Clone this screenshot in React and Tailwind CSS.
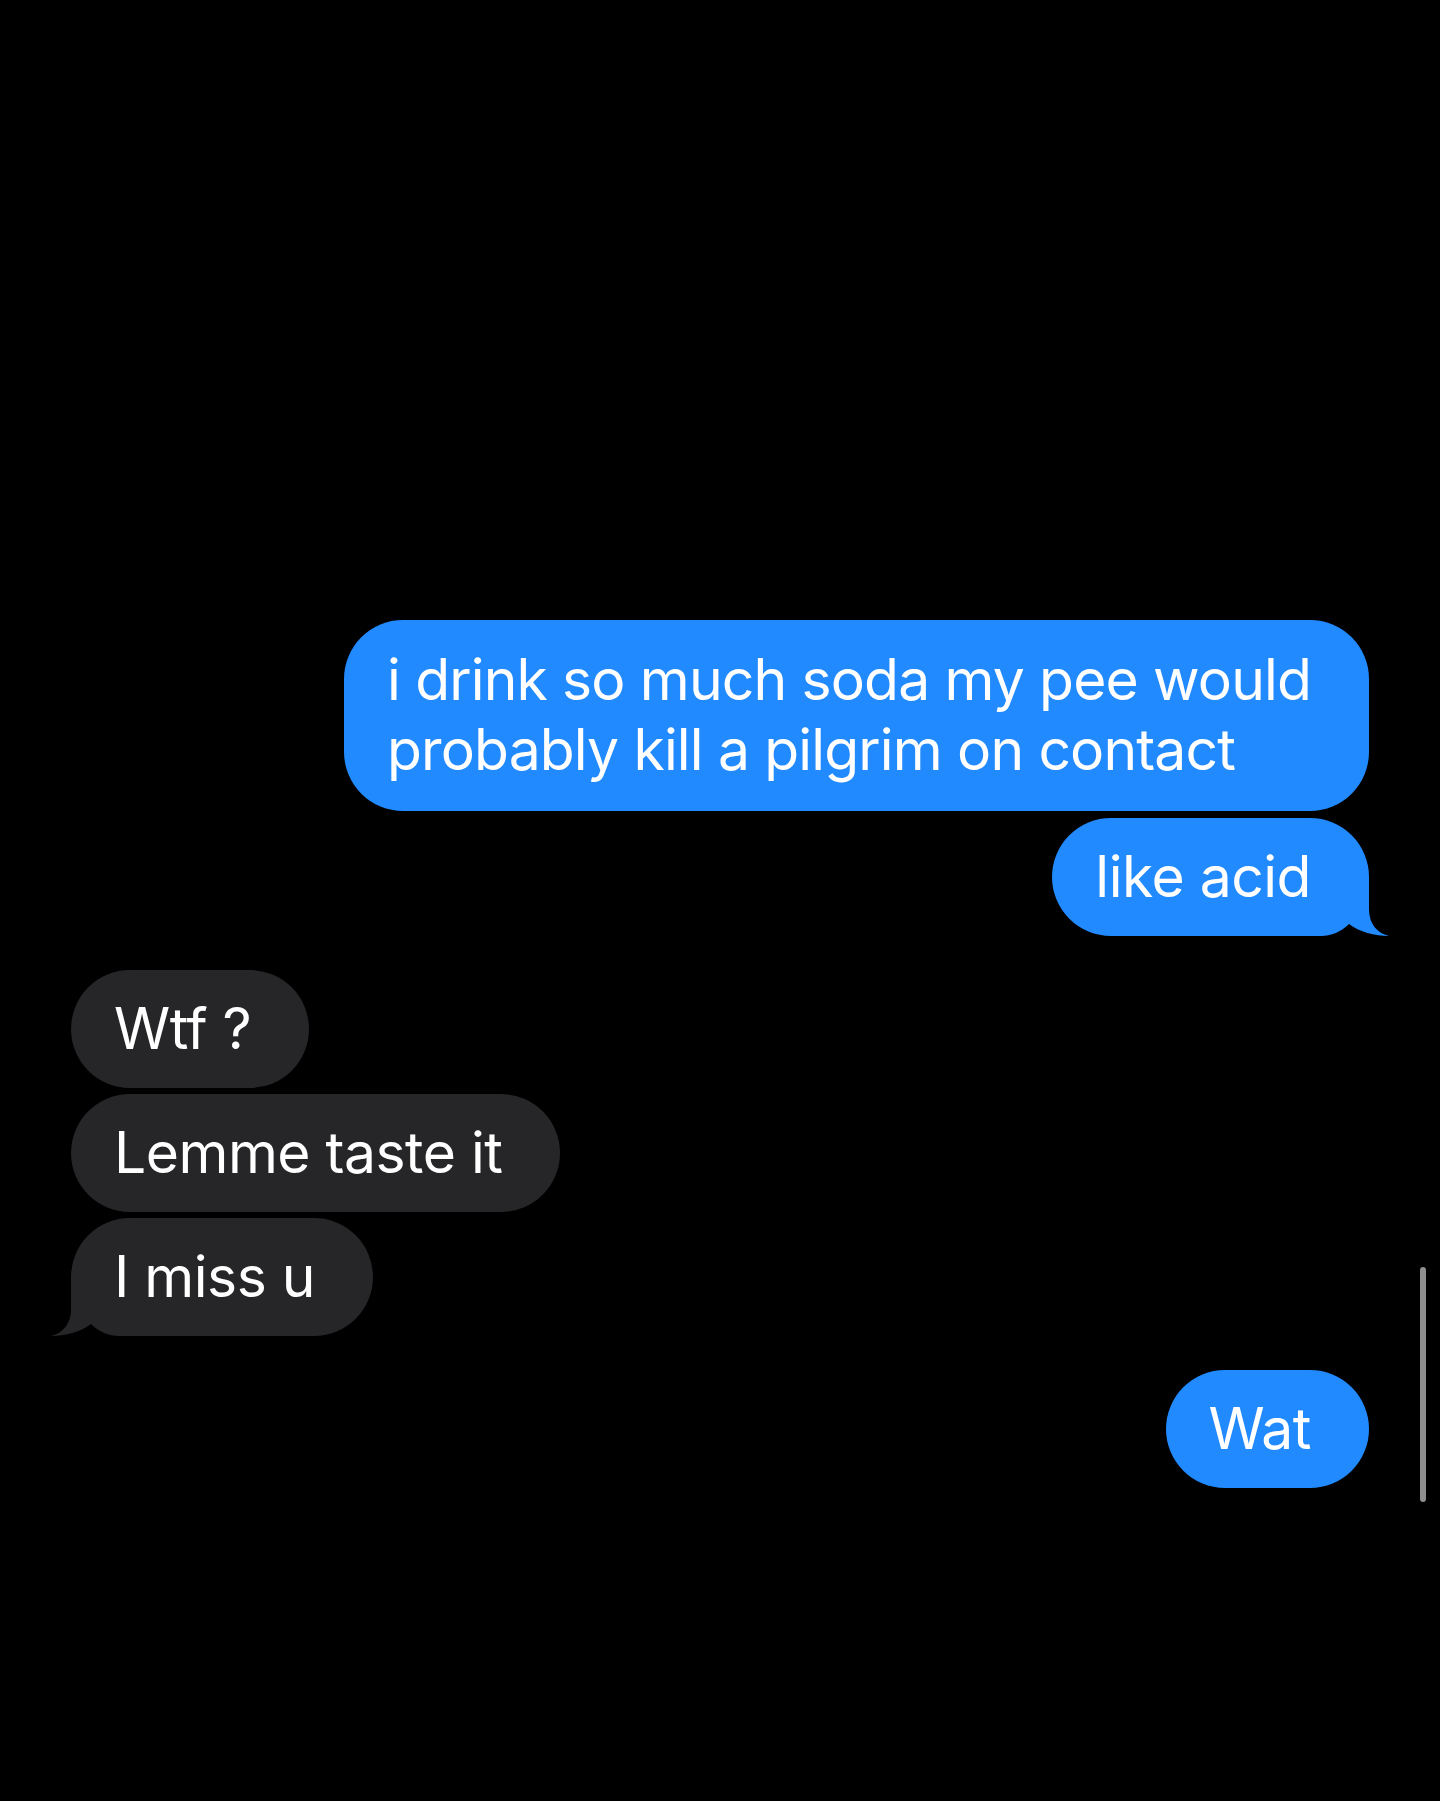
const BLUE = "bg-[#218aff]";

function Tail({ side, color }) {
  const pos = side === "right" ? "-right-[20px]" : "-left-[20px] -scale-x-100";
  return (
    <svg
      className={`absolute bottom-0 ${pos}`}
      width="80"
      height="60"
      viewBox="0 0 80 60"
      fill={color}
    >
      <path d="M0 0 H60 V33 C60 48 68 57 80 60 C66 60 50 56 40 48 C32 56 22 60 12 60 H0 Z" />
    </svg>
  );
}

function Bubble({ me, tail, children }) {
  const color = me ? "#218aff" : "#262628";
  return (
    <div className={`flex ${me ? "justify-end" : "justify-start"}`}>
      <div
        className={`relative rounded-[59px] pl-[43px] pr-[58px] py-[24px] text-white text-[57px] leading-[70px] ${
          me ? BLUE : "bg-[#262628]"
        }`}
      >
        {tail && <Tail side={me ? "right" : "left"} color={color} />}
        <span className="relative">{children}</span>
      </div>
    </div>
  );
}

export default function App() {
  return (
    <div
      className="relative w-[1440px] h-[1801px] bg-black overflow-hidden"
      style={{ fontFamily: "Inter, 'Liberation Sans', sans-serif" }}
    >
      <div className="flex flex-col px-[71px] pt-[620px] tracking-[-0.5px]">
        <div className="flex justify-end">
          <div className={`${BLUE} rounded-[59px] pl-[43px] pr-[40px] pt-[25px] pb-[26px] text-white text-[57px] leading-[70px] tracking-[-0.85px] w-[1025px]`}>
            <div className="whitespace-nowrap">i drink so much soda my pee would</div>
            <div className="whitespace-nowrap">probably kill a pilgrim on contact</div>
          </div>
        </div>
        <div className="mt-[7px]">
          <Bubble me tail>like acid</Bubble>
        </div>
        <div className="mt-[34px] flex flex-col gap-[6px]">
          <Bubble>Wtf ?</Bubble>
          <Bubble>Lemme taste it</Bubble>
          <Bubble tail>I miss u</Bubble>
        </div>
        <div className="mt-[34px]">
          <Bubble me>Wat</Bubble>
        </div>
      </div>
      <div className="absolute left-[1420px] top-[1267px] w-[6px] h-[235px] rounded-full bg-[#8e8e8e]" />
    </div>
  );
}
